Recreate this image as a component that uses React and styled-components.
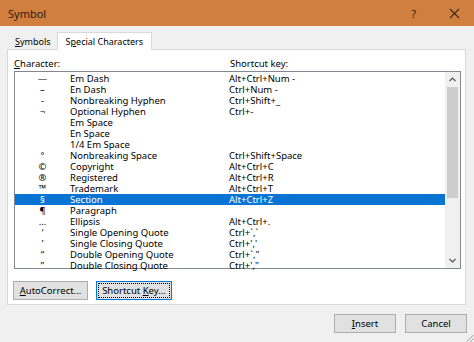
import React from "react";
import styled, { createGlobalStyle } from "styled-components";

const rows = [
  ["—", "Em Dash", "Alt+Ctrl+Num -"],
  ["–", "En Dash", "Ctrl+Num -"],
  ["-", "Nonbreaking Hyphen", "Ctrl+Shift+_"],
  ["¬", "Optional Hyphen", "Ctrl+-"],
  ["", "Em Space", ""],
  ["", "En Space", ""],
  ["", "1/4 Em Space", ""],
  ["°", "Nonbreaking Space", "Ctrl+Shift+Space"],
  ["©", "Copyright", "Alt+Ctrl+C"],
  ["®", "Registered", "Alt+Ctrl+R"],
  ["™", "Trademark", "Alt+Ctrl+T"],
  ["§", "Section", "Alt+Ctrl+Z"],
  ["¶", "Paragraph", ""],
  ["…", "Ellipsis", "Alt+Ctrl+."],
  ["‘", "Single Opening Quote", "Ctrl+`,`"],
  ["’", "Single Closing Quote", "Ctrl+','"],
  ["“", "Double Opening Quote", "Ctrl+`,\""],
  ["”", "Double Closing Quote", "Ctrl+',\""],
];

export default function App() {
  return (
    <>
      <Global />
      <Window>
        <TitleBar>
          <Title>Symbol</Title>
          <TitleTools>
            <Help>?</Help>
            <svg width="11" height="11" viewBox="0 0 11 11">
              <path d="M1 1L10 10M10 1L1 10" stroke="#3a2a1e" strokeWidth="1.1" />
            </svg>
          </TitleTools>
        </TitleBar>
        <Body>
          <Tabs>
            <Tab>
              <span>
                <U>S</U>ymbols
              </span>
            </Tab>
            <Tab active>
              <span>
                S<U>p</U>ecial Characters
              </span>
            </Tab>
          </Tabs>
          <Panel>
            <Labels>
              <CharLabel>
                <U>C</U>haracter:
              </CharLabel>
              <span>Shortcut key:</span>
            </Labels>
            <ListBox>
              <Rows>
                {rows.map((r) => (
                  <Row key={r[1]} selected={r[1] === "Section"}>
                    <Glyph>{r[0]}</Glyph>
                    <Name>{r[1]}</Name>
                    <span>{r[2]}</span>
                  </Row>
                ))}
              </Rows>
              <ScrollBar>
                <Arrow>
                  <svg width="7" height="5" viewBox="0 0 7 5">
                    <path d="M0.5 4L3.5 1L6.5 4" stroke="#555" strokeWidth="1.2" fill="none" />
                  </svg>
                </Arrow>
                <Track>
                  <Thumb />
                </Track>
                <Arrow>
                  <svg width="7" height="5" viewBox="0 0 7 5">
                    <path d="M0.5 1L3.5 4L6.5 1" stroke="#555" strokeWidth="1.2" fill="none" />
                  </svg>
                </Arrow>
              </ScrollBar>
            </ListBox>
            <PanelButtons>
              <Button width={75}>
                <span>
                  <U>A</U>utoCorrect...
                </span>
              </Button>
              <Button width={76} focused>
                <Focus>
                  <span>
                    Shortcut <U>K</U>ey...
                  </span>
                </Focus>
              </Button>
            </PanelButtons>
          </Panel>
          <Footer>
            <Button width={62}>
              <span>
                <U>I</U>nsert
              </span>
            </Button>
            <Button width={62}>Cancel</Button>
          </Footer>
          <Grip width="8" height="8" viewBox="0 0 8 8">
            <path d="M7.5 1L1 7.5M7.5 4.5L4.5 7.5" stroke="#9a9a9a" strokeWidth="1" />
          </Grip>
        </Body>
      </Window>
    </>
  );
}

const Global = createGlobalStyle`
  body {
    margin: 0;
    background: #f0f0f0;
    font-family: "Noto Sans", "Open Sans", sans-serif;
    color: #000;
  }
`;

const Window = styled.div`
  width: 474px;
  height: 342px;
  display: flex;
  flex-direction: column;
  background: #f0f0f0;
  overflow: hidden;
`;

const TitleBar = styled.div`
  height: 26px;
  background: #d17f3f;
  display: flex;
  align-items: center;
  justify-content: space-between;
  padding: 0 14px 0 8px;
  flex-shrink: 0;
`;

const Title = styled.span`
  font-size: 11px;
  line-height: 13px;
  color: #2a1c12;
`;

const TitleTools = styled.div`
  display: flex;
  align-items: center;
  gap: 33px;
`;

const Help = styled.span`
  font-size: 11px;
  line-height: 13px;
  color: #2a1c12;
`;

const Body = styled.div`
  flex: 1;
  display: flex;
  flex-direction: column;
  padding: 5px 8px 0 7px;
  position: relative;
`;

const Tabs = styled.div`
  display: flex;
  align-items: flex-end;
  height: 18px;
  font-size: 9px;
  line-height: 12px;
`;

const Tab = styled.div`
  height: ${(p) => (p.active ? "18px" : "16px")};
  padding: ${(p) => (p.active ? "0 8px" : "0 5px 0 7px")};
  box-sizing: border-box;
  display: flex;
  align-items: center;
  background: ${(p) => (p.active ? "#fff" : "#f0f0f0")};
  border: 1px solid ${(p) => (p.active ? "#d9d9d9" : "#f0f0f0")};
  border-bottom: none;
  margin-bottom: ${(p) => (p.active ? "-1px" : "0")};
  position: relative;
  z-index: 1;
`;

const U = styled.span`
  text-decoration: underline;
  text-underline-offset: 1px;
`;

const Panel = styled.div`
  background: #fff;
  border: 1px solid #d9d9d9;
  padding: 6px 4px 4px 6px;
  display: flex;
  flex-direction: column;
`;

const Labels = styled.div`
  display: flex;
  font-size: 9.5px;
  line-height: 12px;
  height: 15px;
  align-items: center;
`;

const CharLabel = styled.span`
  width: 216px;
`;

const ListBox = styled.div`
  height: 198px;
  border: 1px solid #828790;
  display: flex;
  box-sizing: border-box;
`;

const Rows = styled.div`
  flex: 1;
  padding-top: 1px;
  display: flex;
  flex-direction: column;
`;

const Row = styled.div`
  height: 11px;
  line-height: 11px;
  display: flex;
  align-items: center;
  font-size: 9.5px;
  white-space: pre;
  background: ${(p) => (p.selected ? "#0a74d4" : "transparent")};
  color: ${(p) => (p.selected ? "#fff" : "#000")};
`;

const Glyph = styled.span`
  width: 55px;
  text-align: center;
`;

const Name = styled.span`
  width: 159px;
`;

const ScrollBar = styled.div`
  width: 15px;
  background: #f0f0f0;
  display: flex;
  flex-direction: column;
`;

const Arrow = styled.div`
  height: 15px;
  display: flex;
  align-items: center;
  justify-content: center;
`;

const Track = styled.div`
  flex: 1;
  padding: 0 2px;
`;

const Thumb = styled.div`
  height: 111px;
  background: #cdcdcd;
`;

const PanelButtons = styled.div`
  display: flex;
  gap: 8px;
  margin: 12px 0 0 -1px;
`;

const Button = styled.div`
  width: ${(p) => p.width}px;
  height: 19px;
  box-sizing: border-box;
  background: #e1e1e1;
  border: 1px solid ${(p) => (p.focused ? "#0078d7" : "#adadad")};
  font-size: 9.5px;
  line-height: 12px;
  white-space: pre;
  display: flex;
  align-items: center;
  justify-content: center;
  padding: 1px;
`;

const Focus = styled.div`
  flex: 1;
  align-self: stretch;
  display: flex;
  align-items: center;
  justify-content: center;
  border: 1px dotted #000;
`;

const Footer = styled.div`
  display: flex;
  justify-content: flex-end;
  gap: 9px;
  margin: 9px -1px 0 0;
`;

const Grip = styled.svg`
  position: absolute;
  right: 0;
  bottom: 0;
`;
